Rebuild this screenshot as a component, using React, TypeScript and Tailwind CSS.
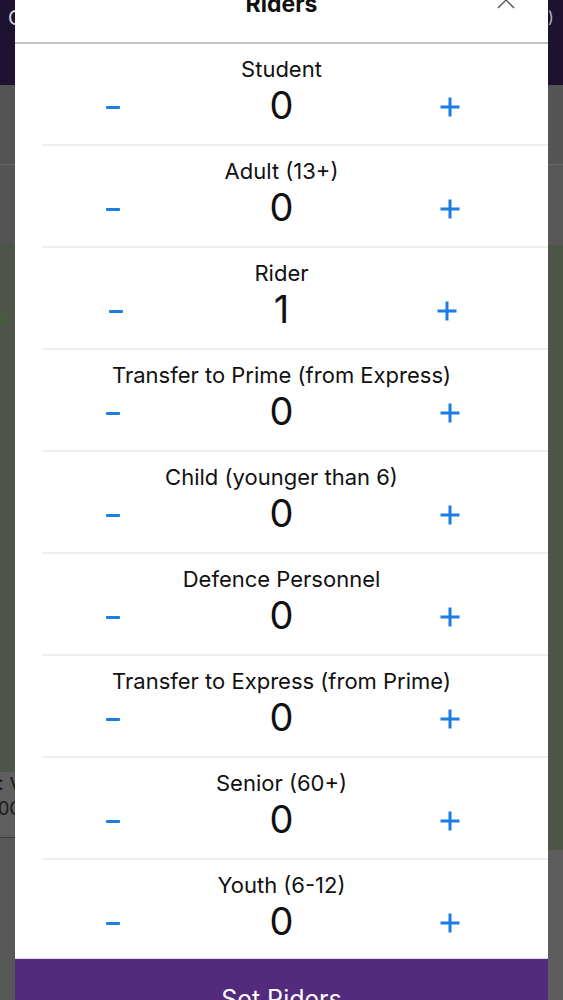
import React from "react";

const rows: { label: string; value: number; tight?: boolean }[] = [
  { label: "Student", value: 0 },
  { label: "Adult (13+)", value: 0 },
  { label: "Rider", value: 1, tight: true },
  { label: "Transfer to Prime (from Express)", value: 0 },
  { label: "Child (younger than 6)", value: 0 },
  { label: "Defence Personnel", value: 0 },
  { label: "Transfer to Express (from Prime)", value: 0 },
  { label: "Senior (60+)", value: 0 },
  { label: "Youth (6-12)", value: 0 },
];

function Minus() {
  return <div className="w-[14px] h-[3px] bg-[#1b7ce4] rounded-[1px]" />;
}

function Plus() {
  return (
    <svg width="20" height="20" viewBox="0 0 20 20">
      <rect x="8.5" y="0.5" width="3" height="19" fill="#1b7ce4" />
      <rect x="0.5" y="8.5" width="19" height="3" fill="#1b7ce4" />
    </svg>
  );
}

function Row({ label, value, tight, last }: { label: string; value: number; tight?: boolean; last?: boolean }) {
  return (
    <div className="flex flex-col">
      <div className={last ? "h-[98px]" : "h-[100px]"}>
        <div className="pt-[12px] text-center text-[22px] leading-[26px] text-[#111]">{label}</div>
        <div className={`grid grid-cols-[1fr_141px_1fr] items-center h-[46px] ${tight ? "px-[6px]" : ""}`}>
          <div className="flex justify-center pt-[4px]">
            <Minus />
          </div>
          <div className="text-center text-[38px] leading-[46px] text-[#111]">{value}</div>
          <div className="flex justify-center pt-[4px]">
            <Plus />
          </div>
        </div>
      </div>
      {!last && <div className="ml-[27px] h-[2px] bg-[#efefef]" />}
    </div>
  );
}

export default function App() {
  return (
    <div
      className="relative w-full h-[1000px] overflow-hidden"
      style={{ fontFamily: "Inter, 'Noto Sans', sans-serif" }}
    >
      {/* dimmed background app */}
      <div className="flex h-full">
        <div className="w-[15px] flex flex-col">
          <div className="h-[85px] bg-[#1d1230] pt-[6px] text-[20px] leading-[24px] text-[#d8d8e0] pl-[8px] overflow-hidden">C</div>
          <div className="h-[80px] bg-[#545454] border-b border-[#6a6a6a]" />
          <div className="h-[80px] bg-[#545454]" />
          <div className="h-[527px] bg-[#4d5448] pt-[66px] text-[12px] leading-[14px] text-[#3f6b2a] overflow-hidden whitespace-nowrap">
            <div className="-ml-[4px]">ld</div>
          </div>
          <div className="h-[66px] bg-[#5e5e5e] border-b border-[#3c3c3c] overflow-hidden whitespace-nowrap text-[#1a1a1a]">
            <div className="-ml-[2px] pt-[2px] text-[20px] leading-[22px]">: V</div>
            <div className="-ml-[2px] pt-[2px] text-[18px] leading-[22px]">0C</div>
          </div>
          <div className="flex-1 bg-[#585858]" />
        </div>
        <div className="flex-1 bg-[#4d5448]" />
        <div className="w-[15px] flex flex-col">
          <div className="h-[85px] bg-[#1d1230] pt-[7px] text-[16px] leading-[20px] text-[#bbb] overflow-hidden">)</div>
          <div className="h-[80px] bg-[#555555] border-b border-[#6a6a6a]" />
          <div className="h-[80px] bg-[#575757]" />
          <div className="h-[605px] bg-[#4d5448]" />
          <div className="flex-1 bg-[#5d5d5d]" />
        </div>
      </div>

      {/* modal */}
      <div className="absolute top-0 bottom-0 left-[15px] right-[15px] bg-white flex flex-col">
        <div className="relative h-[44px] border-b-2 border-[#c2c2c2] overflow-hidden shrink-0">
          <div className="absolute left-0 right-0 top-[-9px] text-center text-[23px] leading-[26px] font-bold text-[#111]">
            Riders
          </div>
          <svg className="absolute left-[482px] top-[-9px]" width="18" height="18" viewBox="0 0 18 18">
            <path d="M1 1 L17 17 M17 1 L1 17" stroke="#555" strokeWidth="1.4" fill="none" />
          </svg>
        </div>
        {rows.map((r, i) => (
          <Row key={r.label} label={r.label} value={r.value} tight={r.tight} last={i === rows.length - 1} />
        ))}
        <div className="flex-1 bg-[#532a7c] border-t border-[#e6d6ee] flex justify-center pt-[25px]">
          <span className="text-white text-[25px] leading-[30px]">Set Riders</span>
        </div>
      </div>
    </div>
  );
}
